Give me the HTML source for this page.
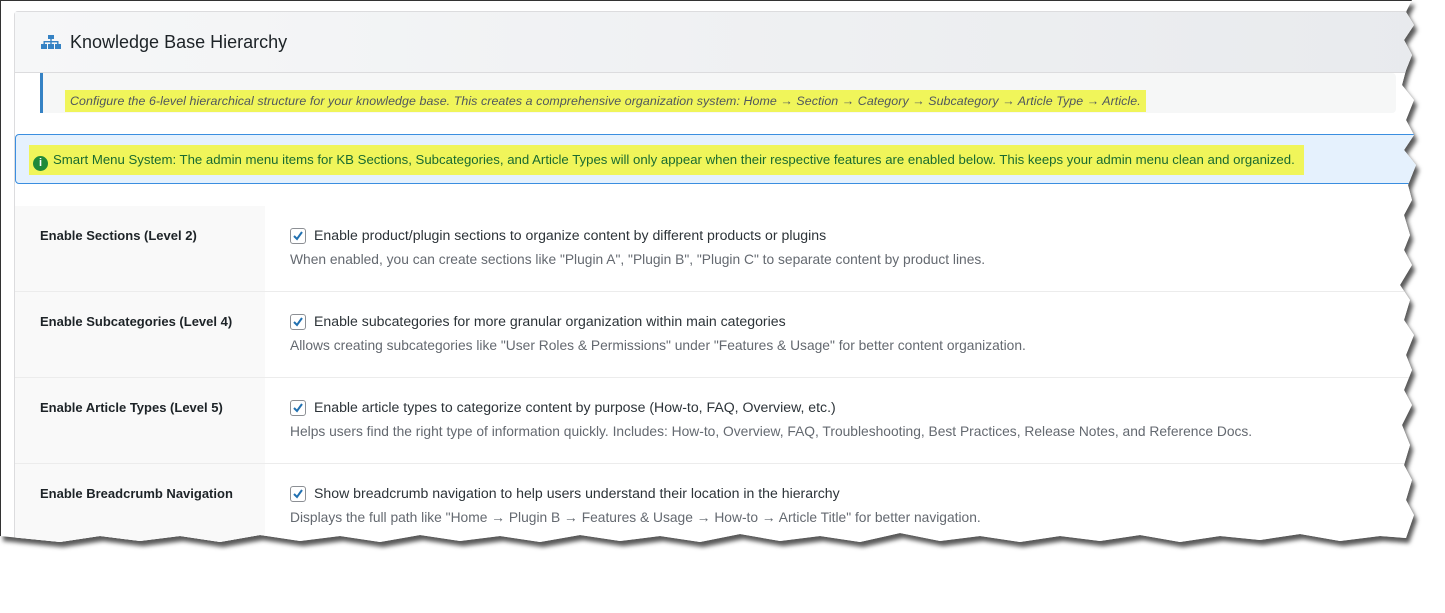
<!DOCTYPE html>
<html><head><meta charset="utf-8"><style>
body{margin:0;width:1445px;height:572px;background:#fff;position:relative;overflow:hidden;font-family:"Liberation Sans",sans-serif;}
#wrap{position:absolute;left:0;top:0;width:1445px;height:572px;filter:drop-shadow(3px 5px 2px rgba(60,60,60,.85))}
#pg{position:absolute;left:0;top:0;width:1445px;height:572px;background:#fff;clip-path:polygon(0 0,1412px 0,1406px 12px,1414px 25px,1404px 40px,1412px 55px,1406px 70px,1402px 85px,1414px 100px,1406px 120px,1414px 135px,1404px 150px,1416px 165px,1408px 185px,1412px 200px,1404px 215px,1410px 235px,1404px 250px,1412px 265px,1400px 285px,1410px 300px,1404px 320px,1414px 335px,1406px 355px,1412px 370px,1404px 390px,1412px 405px,1402px 425px,1410px 445px,1404px 465px,1412px 480px,1406px 500px,1414px 515px,1406px 538px,1380px 536px,1340px 541px,1300px 534px,1260px 540px,1220px 536px,1180px 542px,1140px 535px,1100px 541px,1060px 536px,1020px 542px,980px 536px,940px 541px,900px 533px,860px 542px,820px 536px,780px 541px,740px 534px,700px 542px,660px 536px,620px 541px,580px 535px,540px 542px,500px 536px,460px 541px,420px 535px,380px 542px,340px 536px,300px 541px,260px 535px,220px 542px,180px 536px,140px 541px,100px 536px,60px 542px,20px 538px,0 536px);}
.bd{position:absolute;left:0;top:0;width:1445px;height:572px;border-top:1px solid #333;border-left:1px solid #333;box-sizing:border-box}
.panel{position:absolute;left:14px;top:11px;width:1440px;height:600px;border:1px solid #dcdcde;border-radius:4px;background:#fff}
.hdr{height:60px;background:linear-gradient(90deg,#f6f7f8,#e8eaed);border-bottom:1px solid #dcdcde;position:relative}
.hdr h2{position:absolute;left:55px;top:20px;margin:0;font-size:18px;font-weight:normal;color:#1d2327}
.desc{position:absolute;left:25px;top:61px;width:1353px;height:40px;background:#f6f7f7;border-left:3px solid #3582c4;border-radius:0 4px 4px 0}
.hl{background:#f0f55a}
.desc span{position:absolute;left:22px;top:17px;padding:4px 5px;font-style:italic;font-size:12.4px;letter-spacing:.08px;color:#50575e;white-space:nowrap}
.notice{position:absolute;left:0;top:122px;width:1420px;height:50px;background:#e5f1fd;border:1px solid #3a8ee0;border-radius:4px;box-sizing:border-box}
.notice span{position:absolute;left:13px;top:10px;height:30px;line-height:30px;padding:0 9px 0 4px;font-size:13.2px;color:#1a6b30;white-space:nowrap}
.ic{display:inline-block;width:15px;height:15px;border-radius:50%;background:#1f8a3a;color:#fff;font-size:11px;line-height:15px;text-align:center;font-weight:bold;font-style:normal;vertical-align:-2px;margin-right:5px}
.row{position:absolute;left:0;width:1440px;height:85px;border-bottom:1px solid #ececec}
.row .l{position:absolute;left:0;top:0;width:250px;height:100%;background:#f9f9f9}
.row .l b{position:absolute;left:25px;top:22px;font-size:13px;color:#1d2327}
.cb{position:absolute;left:275px;top:22px;width:14px;height:14px;border:1px solid #8c8f94;border-radius:3px;background:#fff}
.t1{position:absolute;left:299px;top:21px;font-size:14.1px;color:#2c3338;white-space:nowrap}
.t2{position:absolute;left:275px;top:46px;font-size:13.8px;color:#646970;white-space:nowrap}
</style></head><body>
<div id="wrap"><div id="pg"><div class="bd"></div>
<div class="panel">
 <div class="hdr">
  <svg style="position:absolute;left:26px;top:23px" width="20" height="14" viewBox="0 0 20 14"><rect x="7" y="0" width="6" height="4" fill="#3582c4"/><rect x="9.3" y="4" width="1.4" height="3" fill="#3582c4"/><rect x="2.5" y="6" width="15" height="1.4" fill="#3582c4"/><rect x="2.5" y="6" width="1.4" height="3" fill="#3582c4"/><rect x="16.1" y="6" width="1.4" height="3" fill="#3582c4"/><rect x="9.3" y="6" width="1.4" height="3" fill="#3582c4"/><rect x="0" y="9" width="6" height="5" fill="#3582c4"/><rect x="7" y="9" width="6" height="5" fill="#3582c4"/><rect x="14" y="9" width="6" height="5" fill="#3582c4"/></svg>
  <h2>Knowledge Base Hierarchy</h2>
 </div>
 <div class="desc"><span class="hl">Configure the 6-level hierarchical structure for your knowledge base. This creates a comprehensive organization system: Home → Section → Category → Subcategory → Article Type → Article.</span></div>
 <div class="notice"><span class="hl"><i class="ic">i</i>Smart Menu System: The admin menu items for KB Sections, Subcategories, and Article Types will only appear when their respective features are enabled below. This keeps your admin menu clean and organized.</span></div>
 <div class="row" style="top:194px"><div class="l"><b>Enable Sections (Level 2)</b></div><div class="cb"><svg width="14" height="14"><path d="M3 7l3 3 5-7" stroke="#2271b1" stroke-width="2" fill="none"/></svg></div><div class="t1">Enable product/plugin sections to organize content by different products or plugins</div><div class="t2">When enabled, you can create sections like "Plugin A", "Plugin B", "Plugin C" to separate content by product lines.</div></div>
 <div class="row" style="top:280px"><div class="l"><b>Enable Subcategories (Level 4)</b></div><div class="cb"><svg width="14" height="14"><path d="M3 7l3 3 5-7" stroke="#2271b1" stroke-width="2" fill="none"/></svg></div><div class="t1">Enable subcategories for more granular organization within main categories</div><div class="t2">Allows creating subcategories like "User Roles &amp; Permissions" under "Features &amp; Usage" for better content organization.</div></div>
 <div class="row" style="top:366px"><div class="l"><b>Enable Article Types (Level 5)</b></div><div class="cb"><svg width="14" height="14"><path d="M3 7l3 3 5-7" stroke="#2271b1" stroke-width="2" fill="none"/></svg></div><div class="t1">Enable article types to categorize content by purpose (How-to, FAQ, Overview, etc.)</div><div class="t2">Helps users find the right type of information quickly. Includes: How-to, Overview, FAQ, Troubleshooting, Best Practices, Release Notes, and Reference Docs.</div></div>
 <div class="row" style="top:452px"><div class="l"><b>Enable Breadcrumb Navigation</b></div><div class="cb"><svg width="14" height="14"><path d="M3 7l3 3 5-7" stroke="#2271b1" stroke-width="2" fill="none"/></svg></div><div class="t1">Show breadcrumb navigation to help users understand their location in the hierarchy</div><div class="t2">Displays the full path like "Home → Plugin B → Features &amp; Usage → How-to → Article Title" for better navigation.</div></div>
</div>
</div></div>
</body></html>
